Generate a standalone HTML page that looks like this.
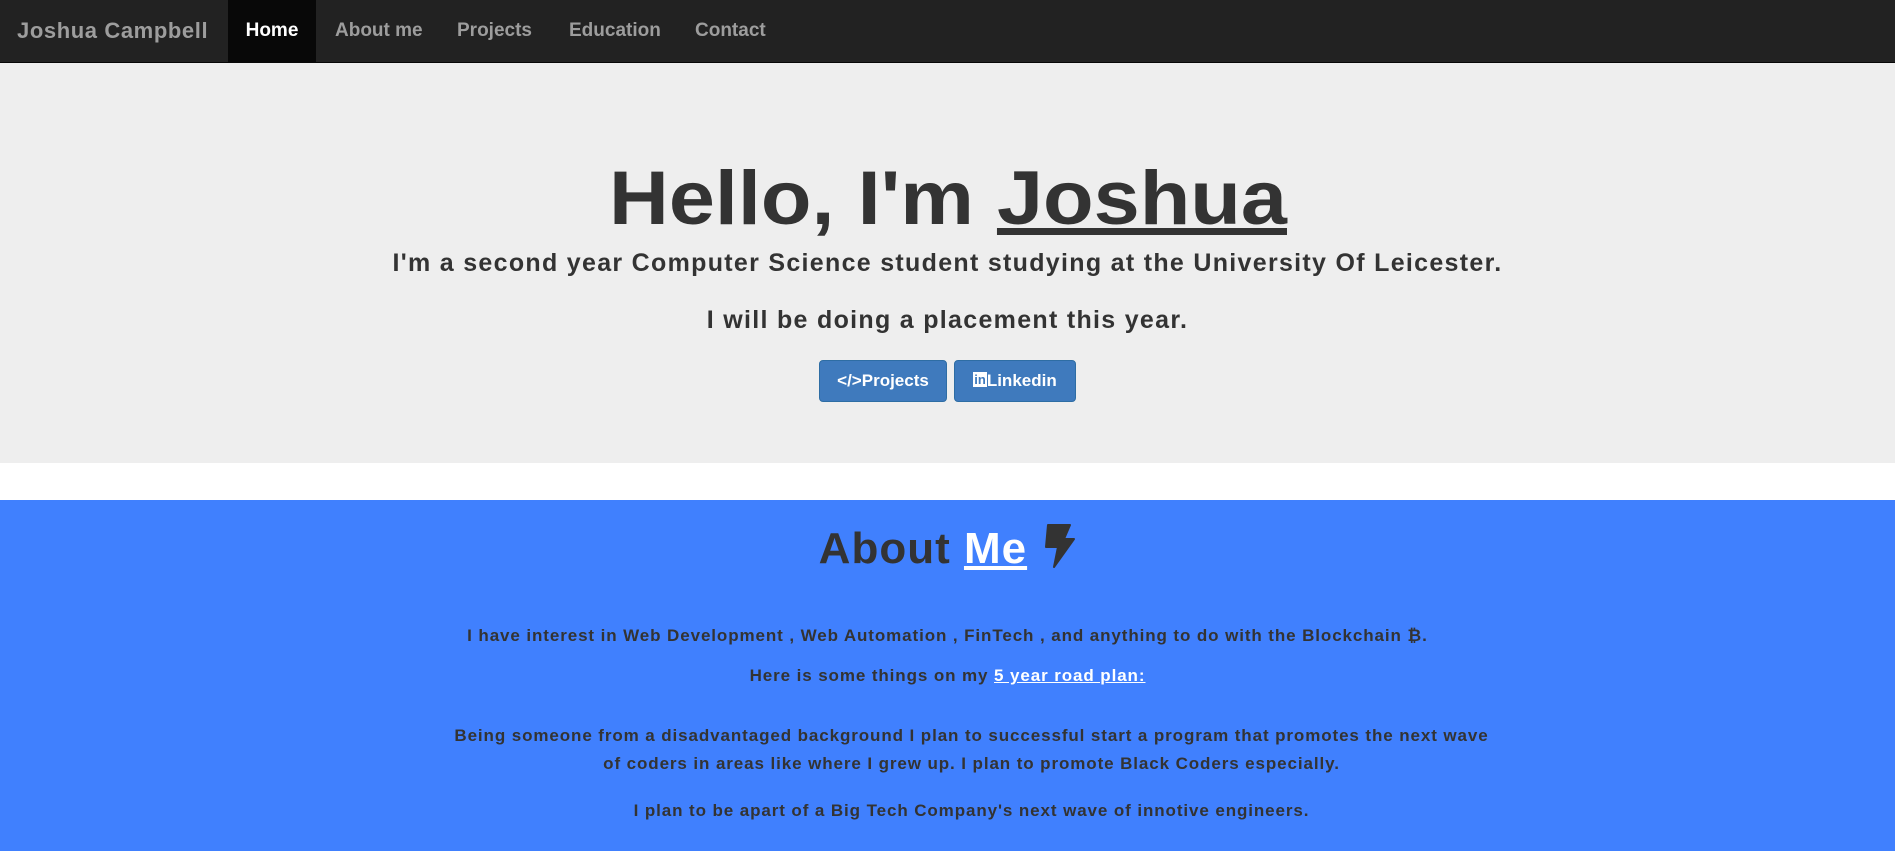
<!DOCTYPE html>
<html><head><meta charset="utf-8"><style>
*{margin:0;padding:0;box-sizing:border-box}
body{width:1895px;height:851px;overflow:hidden;font-family:"Liberation Sans",sans-serif;background:#fff;color:#333}
nav{height:63px;background:#222;border-bottom:1px solid #080808;position:relative}
nav span{position:absolute;top:0;height:62px;line-height:62px;font-weight:bold;color:#9d9d9d;font-size:19px}
.brand{left:17px;font-size:22px;letter-spacing:0.6px}
.home{left:228px;width:88px;background:#080808;color:#fff !important;text-align:center}
.hero{position:absolute;top:63px;left:0;width:1895px;height:400px;background:#eee;text-align:center}
h1{position:absolute;top:86px;left:0;width:100%;font-size:76px;line-height:100px;font-weight:bold}
h1 .in{display:inline-block;transform:scaleX(1.09)}
.hero p{position:absolute;left:0;width:100%;font-size:25px;font-weight:bold;letter-spacing:1.3px}
.btn{position:absolute;top:297px;height:42px;background:#3f7abd;border:1px solid #2e6da4;border-radius:4px;color:#fff;font-weight:bold;font-size:17px;line-height:40px;text-align:center}
.about{position:absolute;top:500px;left:0;width:1895px;height:351px;background:#4080fe;text-align:center}
.about h2{position:absolute;top:22px;width:100%;font-size:44px;line-height:54px;font-weight:bold;letter-spacing:1px}
.about p{position:absolute;left:0;width:100%;font-size:17px;font-weight:bold;line-height:28px;letter-spacing:0.9px}
.about p.r{padding-left:48px}
a{color:#fff}
</style></head><body>
<nav><span class="brand">Joshua Campbell</span><span class="home">Home</span><span style="left:335px">About me</span><span style="left:457px">Projects</span><span style="left:569px">Education</span><span style="left:695px">Contact</span></nav>
<div class="hero">
<h1><span class="in">Hello, I'm <u>Joshua</u></span></h1>
<p style="top:186px">I'm a second year Computer Science student studying at the University Of Leicester.</p>
<p style="top:243px">I will be doing a placement this year.</p>
<div class="btn" style="left:819px;width:128px">&lt;/&gt;Projects</div>
<div class="btn" style="left:954px;width:122px"><span style="display:inline-block;background:#fff;color:#3f7abd;font-size:13px;line-height:15px;padding:0 1px;vertical-align:2px">in</span>Linkedin</div>
</div>
<div class="about">
<h2>About <u style="color:#fff">Me</u> <svg width="36" height="46" viewBox="0 0 36 46" style="vertical-align:-6px"><path d="M8 2h22l-6 14h10L14 44l4-20H6z" fill="#333" stroke="#333" stroke-linejoin="round" stroke-width="2"/></svg></h2>
<p style="top:122px">I have interest in Web Development , Web Automation , FinTech , and anything to do with the Blockchain ₿.</p>
<p style="top:162px">Here is some things on my <a href="#"><u>5 year road plan:</u></a></p>
<p class="r" style="top:222px">Being someone from a disadvantaged background I plan to successful start a program that promotes the next wave<br>of coders in areas like where I grew up. I plan to promote Black Coders especially.</p>
<p class="r" style="top:297px">I plan to be apart of a Big Tech Company's next wave of innotive engineers.</p>
</div>
</body></html>
